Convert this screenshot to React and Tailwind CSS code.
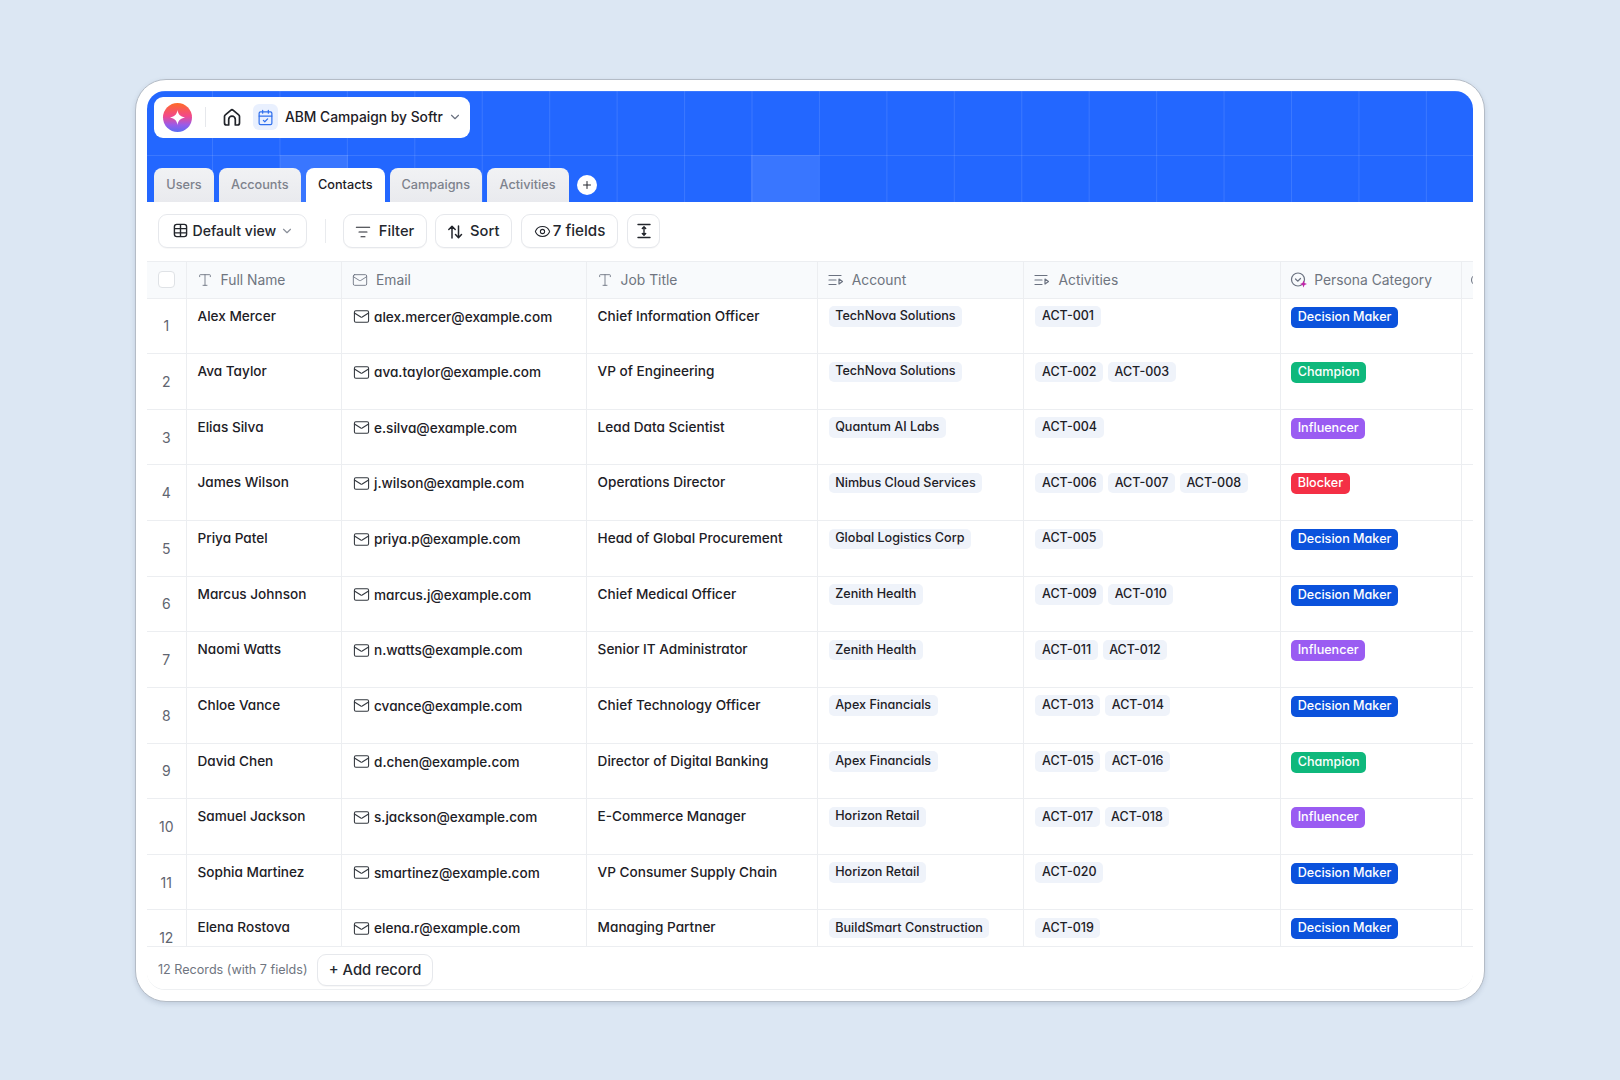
import React from 'react';
import { CalendarCheck, ChevronDown, Eye, ListFilter, Mail, Plus, Type } from 'lucide-react';

const rows = [
  { name: 'Alex Mercer', email: 'alex.mercer@example.com', job: 'Chief Information Officer', account: 'TechNova Solutions', activities: ['ACT-001'], persona: 'Decision Maker' },
  { name: 'Ava Taylor', email: 'ava.taylor@example.com', job: 'VP of Engineering', account: 'TechNova Solutions', activities: ['ACT-002', 'ACT-003'], persona: 'Champion' },
  { name: 'Elias Silva', email: 'e.silva@example.com', job: 'Lead Data Scientist', account: 'Quantum AI Labs', activities: ['ACT-004'], persona: 'Influencer' },
  { name: 'James Wilson', email: 'j.wilson@example.com', job: 'Operations Director', account: 'Nimbus Cloud Services', activities: ['ACT-006', 'ACT-007', 'ACT-008'], persona: 'Blocker' },
  { name: 'Priya Patel', email: 'priya.p@example.com', job: 'Head of Global Procurement', account: 'Global Logistics Corp', activities: ['ACT-005'], persona: 'Decision Maker' },
  { name: 'Marcus Johnson', email: 'marcus.j@example.com', job: 'Chief Medical Officer', account: 'Zenith Health', activities: ['ACT-009', 'ACT-010'], persona: 'Decision Maker' },
  { name: 'Naomi Watts', email: 'n.watts@example.com', job: 'Senior IT Administrator', account: 'Zenith Health', activities: ['ACT-011', 'ACT-012'], persona: 'Influencer' },
  { name: 'Chloe Vance', email: 'cvance@example.com', job: 'Chief Technology Officer', account: 'Apex Financials', activities: ['ACT-013', 'ACT-014'], persona: 'Decision Maker' },
  { name: 'David Chen', email: 'd.chen@example.com', job: 'Director of Digital Banking', account: 'Apex Financials', activities: ['ACT-015', 'ACT-016'], persona: 'Champion' },
  { name: 'Samuel Jackson', email: 's.jackson@example.com', job: 'E-Commerce Manager', account: 'Horizon Retail', activities: ['ACT-017', 'ACT-018'], persona: 'Influencer' },
  { name: 'Sophia Martinez', email: 'smartinez@example.com', job: 'VP Consumer Supply Chain', account: 'Horizon Retail', activities: ['ACT-020'], persona: 'Decision Maker' },
  { name: 'Elena Rostova', email: 'elena.r@example.com', job: 'Managing Partner', account: 'BuildSmart Construction', activities: ['ACT-019'], persona: 'Decision Maker' },
];

const personaColors = {
  'Decision Maker': 'bg-[#0b52dc]',
  Champion: 'bg-[#0fb87c]',
  Influencer: 'bg-[#9a5cf2]',
  Blocker: 'bg-[#f42f45]',
};

const tabs = [
  { label: 'Users', width: 'w-[60px]' },
  { label: 'Accounts', width: 'w-[82.5px]' },
  { label: 'Contacts', width: 'w-[79.5px]' },
  { label: 'Campaigns', width: 'w-[92.5px]' },
  { label: 'Activities', width: 'w-[82px]' },
];

const cols = 'grid grid-cols-[39.5px_155.5px_244.6px_231.1px_206.8px_256.2px_181px_11px]';

function LinkedIcon() {
  return (
    <svg width="16" height="16" viewBox="0 0 16 16" fill="none" stroke="#6b7280" strokeWidth="1.2" strokeLinecap="round" strokeLinejoin="round">
      <path d="M1 3.500h12M1 8h7M1 12.500h7" />
      <path d="M11 7l3.500 2.500L11 12z" />
    </svg>
  );
}

function PersonaIcon() {
  return (
    <svg className="shrink-0" width="18" height="18" viewBox="0 0 18 18" fill="none">
      <circle cx="8" cy="8.500" r="6.500" stroke="#6b7280" strokeWidth="1.2" />
      <path d="M5.500 8l2.200 2.200L10.500 7.500" stroke="#6b7280" strokeWidth="1.2" strokeLinecap="round" strokeLinejoin="round" />
      <path d="M13.500 9.500l1 2.500 2.500 1-2.500 1-1 2.500-1-2.500-2.500-1 2.500-1z" fill="#c026a8" />
    </svg>
  );
}

function HeaderCell({ icon, label, className = 'pl-[10px] gap-[8px]' }) {
  return (
    <div className={`flex items-center pt-px border-r border-[#eceef1] text-[13.85px] text-[#6f7580] overflow-hidden whitespace-nowrap ${className}`}>
      {icon}
      <span>{label}</span>
    </div>
  );
}

function ToolButton({ children, className }) {
  return (
    <button className={`flex items-center rounded-[9px] border border-[#e6e8ec] bg-white font-[450] text-[#24272e] shadow-[0_1px_1px_rgba(0,0,0,0.03)] ${className}`}>
      {children}
    </button>
  );
}

export default function App() {
  return (
    <div className="min-h-screen flex items-center justify-center bg-[#dce7f3] font-['Inter',sans-serif]">
      <div className="w-[1350px] h-[923px] rounded-[31px] bg-white border-[1.5px] border-[#b4bcc6] p-[11px] shadow-[0_2px_5px_rgba(70,90,120,0.18)]">
        <div className="h-full flex flex-col rounded-[18px] border-b border-[#eef0f2] overflow-hidden">
          {/* Blue header with grid pattern */}
          <div className="relative h-[111px] shrink-0 flex flex-col justify-between pt-[6px] pl-[7px] bg-[#2367ff] bg-[linear-gradient(to_right,rgba(255,255,255,0.11)_1px,transparent_1px),linear-gradient(to_bottom,rgba(255,255,255,0.11)_1px,transparent_1px)] bg-[size:67.45px_64px] bg-[position:65px_0]">
            <div className="absolute left-[133px] top-[64px] w-[67.5px] h-[47px] bg-white/10" />
            <div className="absolute left-[604px] top-[64px] w-[67.5px] h-[47px] bg-white/10" />

            <div className="relative w-[316px] h-[41.5px] flex items-center rounded-[9px] bg-white">
              <div className="ml-[9px] w-[29px] h-[29px] rounded-full flex items-center justify-center bg-[linear-gradient(180deg,#ff6a26_0%,#f2498a_45%,#9a5be8_75%,#5a6cf2_100%)]">
                <svg width="15" height="15" viewBox="0 0 16 16" fill="white">
                  <path d="M8 0c.7 4.600 2.800 7 8 8-5.200 1-7.300 3.400-8 8-.7-4.600-2.800-7-8-8 5.200-1 7.300-3.400 8-8z" />
                </svg>
              </div>
              <div className="ml-[13px] w-px h-[20px] bg-[#e6e8ec]" />
              <svg className="ml-[16px]" width="20" height="20" viewBox="0 0 20 20" fill="none" stroke="#22252b" strokeWidth="1.7" strokeLinecap="round" strokeLinejoin="round">
                <path d="M2.500 9.500c0-.6.3-1.200.8-1.600l5.400-4.600a2 2 0 0 1 2.600 0l5.400 4.600c.5.4.8 1 .8 1.600V16a2 2 0 0 1-2 2h-2.200v-5.500a3.300 3.300 0 0 0-6.600 0V18H4.500a2 2 0 0 1-2-2z" />
              </svg>
              <div className="ml-[11px] w-[25px] h-[26px] rounded-[6px] bg-[#e9f0fe] flex items-center justify-center">
                <CalendarCheck size={17} color="#2f6fed" strokeWidth={1.7} />
              </div>
              <span className="ml-[7px] text-[13.8px] font-medium text-[#1d2026] whitespace-nowrap">ABM Campaign by Softr</span>
              <ChevronDown className="ml-[5px]" size={14} color="#6b7280" />
            </div>

            <div className="relative flex items-end h-[33.5px] gap-[4.5px]">
              {tabs.map((t) => (
                <div
                  key={t.label}
                  className={`h-full ${t.width} flex items-center justify-center rounded-t-[8px] text-[12.7px] font-medium ${t.label === 'Contacts' ? 'bg-white text-[#1d2026]' : 'bg-linear-to-b from-[#f1f2f4] to-[#e9eaee] text-[#7d828c]'}`}
                >
                  {t.label}
                </div>
              ))}
              <div className="ml-[4px] mb-[6.500px] w-[20px] h-[20px] rounded-full bg-white flex items-center justify-center">
                <Plus size={12} color="#24272e" strokeWidth={2} />
              </div>
            </div>
          </div>

          {/* Toolbar */}
          <div className="h-[59px] shrink-0 flex items-start pt-[12.500px] pl-[11px] bg-white">
            <ToolButton className="h-[33.5px] w-[148.5px] pl-[14px] text-[14.1px]">
              <svg width="15" height="15" viewBox="0 0 16 16" fill="none" stroke="#22252b" strokeWidth="1.5">
                <rect x="1.500" y="1.500" width="13" height="13" rx="2.500" />
                <path d="M1.500 6h13M1.500 10.500h13M8 1.500v13" />
              </svg>
              <span className="ml-[4.500px]">Default view</span>
              <ChevronDown className="ml-[4px]" size={14} color="#8b909a" />
            </ToolButton>
            <div className="ml-[18px] mr-[17px] mt-[5px] w-px h-[24px] bg-[#e9ebee]" />
            <ToolButton className="h-[33.5px] w-[84px] justify-center gap-[8px] pt-[1.500px] text-[14.7px]">
              <ListFilter size={16} strokeWidth={1.6} />
              Filter
            </ToolButton>
            <ToolButton className="h-[33.5px] ml-[8px] w-[77.5px] justify-center gap-[7px] pt-[1.500px] text-[14.7px]">
              <svg width="16" height="16" viewBox="0 0 16 16" fill="none" stroke="#22252b" strokeWidth="1.5" strokeLinecap="round" strokeLinejoin="round">
                <path d="M5 14V2.500M1.800 5.500 5 2.300l3.200 3.200M11.500 2v11.500M8.500 10.500l3 3.200 3-3.200" />
              </svg>
              Sort
            </ToolButton>
            <ToolButton className="h-[33.5px] ml-[9px] w-[97px] justify-center gap-[2px] pt-[1.500px] text-[15.2px]">
              <Eye size={17} strokeWidth={1.5} />
              7 fields
            </ToolButton>
            <ToolButton className="h-[33.5px] ml-[9px] w-[33px] justify-center pt-px">
              <svg width="16" height="16" viewBox="0 0 16 16" fill="none" stroke="#22252b" strokeWidth="1.4" strokeLinecap="round" strokeLinejoin="round">
                <path d="M2 1.500h12M2 14.500h12M8 4v8M6.300 5.500 8 3.800l1.700 1.700M6.300 10.500 8 12.200l1.700-1.700" />
              </svg>
            </ToolButton>
          </div>

          {/* Table */}
          <div className={`${cols} h-[38px] shrink-0 bg-[#f8fafc] border-y border-[#eceef1]`}>
            <div className="flex items-center justify-center border-r border-[#eceef1]">
              <div className="w-[16.500px] h-[16.500px] rounded-[4px] border border-[#dfe2e6] bg-white" />
            </div>
            <HeaderCell icon={<Type size={16} color="#6b7280" strokeWidth={1.3} />} label="Full Name" />
            <HeaderCell icon={<Mail size={16} color="#6b7280" strokeWidth={1.3} />} label="Email" />
            <HeaderCell icon={<Type size={16} color="#6b7280" strokeWidth={1.3} />} label="Job Title" />
            <HeaderCell icon={<LinkedIcon />} label="Account" />
            <HeaderCell icon={<LinkedIcon />} label="Activities" />
            <HeaderCell icon={<PersonaIcon />} label="Persona Category" className="pl-[9px] gap-[6.500px]" />
            <div className="overflow-hidden pl-[9px] pt-[12px]">
              <div className="w-[12px] h-[12px] rounded-full border border-[#6b7280]" />
            </div>
          </div>

          <div className="flex-1 min-h-0 overflow-hidden">
            {rows.map((r, i) => (
              <div key={r.name} className={`${cols} h-[55.64px] border-b border-[#eceef1] text-[13.6px] font-medium text-[#1d2026] [font-feature-settings:'cv11']`}>
                <div className="flex items-center justify-center border-r border-[#eceef1] text-[14px] font-normal text-[#5f6570]">{i + 1}</div>
                <div className="pl-[11px] pt-[7px] border-r border-[#eceef1] whitespace-nowrap">{r.name}</div>
                <div className="pl-[11px] pt-[8px] flex items-start gap-[4px] border-r border-[#eceef1] whitespace-nowrap">
                  <Mail className="mt-[1.500px] shrink-0" size={17} color="#33383f" strokeWidth={1.5} />
                  <span>{r.email}</span>
                </div>
                <div className="pl-[11px] pt-[7px] border-r border-[#eceef1] whitespace-nowrap">{r.job}</div>
                <div className="pl-[11px] pt-[7.500px] flex items-start border-r border-[#eceef1]">
                  <span className="h-[20.500px] flex items-center px-[6.500px] rounded-[5px] bg-[#eff3fa] text-[12.6px] whitespace-nowrap">{r.account}</span>
                </div>
                <div className="pl-[11px] pt-[7.500px] flex items-start gap-[5px] border-r border-[#eceef1]">
                  {r.activities.map((a) => (
                    <span key={a} className="h-[20.500px] flex items-center px-[6.500px] rounded-[5px] bg-[#eff3fa] text-[12.5px] whitespace-nowrap">{a}</span>
                  ))}
                </div>
                <div className="pl-[10.500px] pt-[8px] flex items-start border-r border-[#eceef1]">
                  <span className={`h-[21px] flex items-center px-[6.500px] rounded-[5px] text-[12.6px] text-white whitespace-nowrap ${personaColors[r.persona]}`}>{r.persona}</span>
                </div>
                <div />
              </div>
            ))}
          </div>

          {/* Footer */}
          <div className="h-[42.5px] shrink-0 flex items-start pt-[6.500px] pl-[11px] border-t border-[#eceef1] bg-white">
            <span className="mt-[7px] text-[12.6px] text-[#6f7580]">12 Records (with 7 fields)</span>
            <ToolButton className="h-[32.5px] ml-[9.500px] w-[116px] justify-center text-[14.8px]">+ Add record</ToolButton>
          </div>
        </div>
      </div>
    </div>
  );
}
